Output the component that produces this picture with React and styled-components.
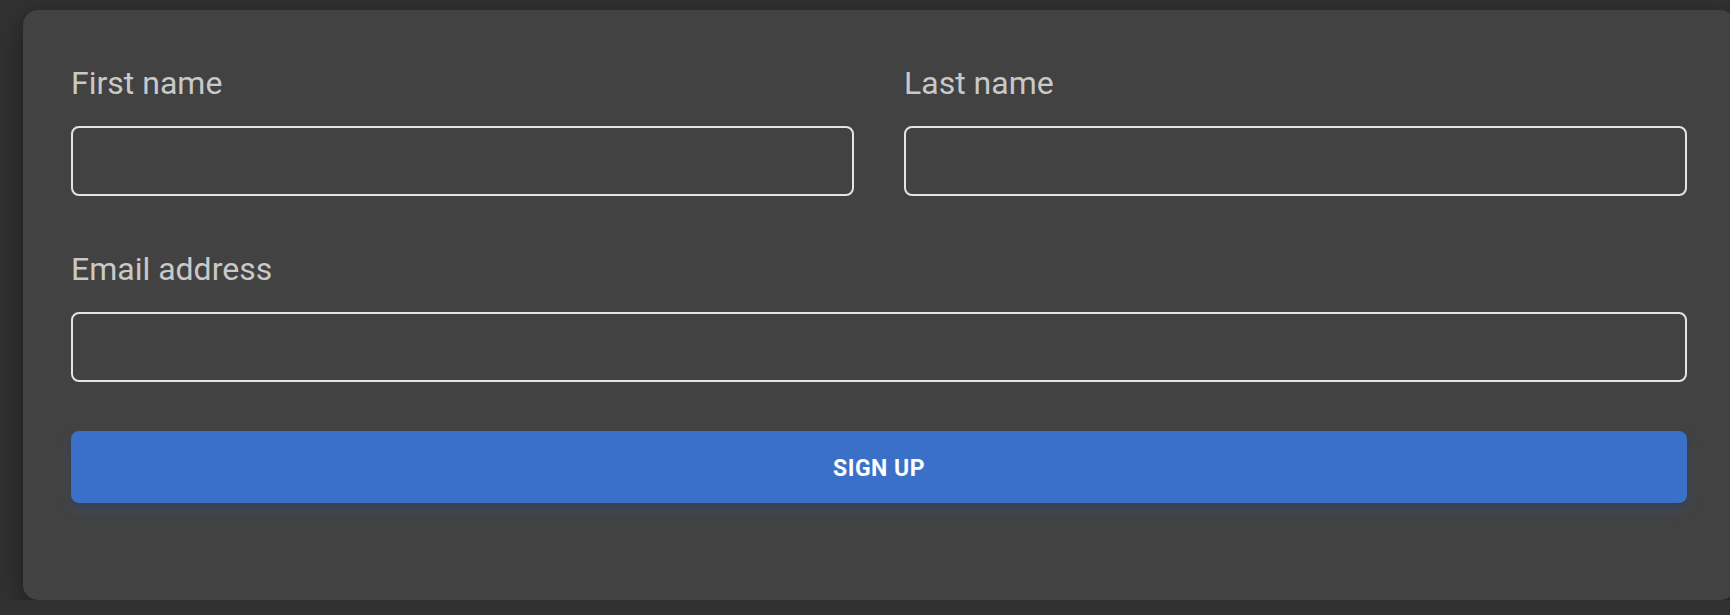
import React from "react";
import styled, { createGlobalStyle } from "styled-components";

const Global = createGlobalStyle`
  html, body {
    margin: 0;
    padding: 0;
    overflow: hidden;
    background: #313131;
  }
  body {
    font-family: Roboto, "Noto Sans", "Liberation Sans", sans-serif;
  }
  * { box-sizing: border-box; }
`;

const Page = styled.div`
  padding: 10px 0 0 23px;
  width: 1760px;
`;

const Card = styled.form`
  width: 1712px;
  background: #424242;
  border-radius: 15px;
  padding: 54px 48px 97px;
  box-shadow: 0 8px 26px rgba(0, 0, 0, 0.4);
  display: flex;
  flex-direction: column;
`;

const Row = styled.div`
  display: grid;
  grid-template-columns: 1fr 1fr;
  column-gap: 50px;
  width: 1616px;
`;

const Field = styled.div`
  display: flex;
  flex-direction: column;
  gap: 24px;
  width: 1616px;
  margin-top: ${(p) => p.$top || 0}px;
  ${Row} & { width: auto; }
`;

const Label = styled.label`
  font-size: 32px;
  line-height: 38px;
  color: rgba(255, 255, 255, 0.72);
  font-weight: 400;
`;

const Input = styled.input`
  height: 70px;
  width: 100%;
  background: transparent;
  border: 2px solid #e4e4e4;
  border-radius: 8px;
  outline: none;
  color: #fff;
  font-size: 24px;
  font-family: inherit;
  padding: 0 16px;
`;

const Button = styled.button`
  margin-top: 49px;
  width: 1616px;
  height: 72px;
  border: none;
  border-radius: 8px;
  background: #3b70c9;
  color: #fff;
  font-family: inherit;
  font-size: 23px;
  font-weight: 700;
  letter-spacing: 0.5px;
  padding-top: 3px;
  text-transform: uppercase;
  box-shadow: 0 6px 14px rgba(59, 112, 201, 0.25), 0 3px 6px rgba(0, 0, 0, 0.2);
  cursor: pointer;
`;

export default function App() {
  return (
    <>
      <Global />
      <Page>
        <Card onSubmit={(e) => e.preventDefault()}>
          <Row>
            <Field>
              <Label>First name</Label>
              <Input type="text" />
            </Field>
            <Field>
              <Label>Last name</Label>
              <Input type="text" />
            </Field>
          </Row>
          <Field $top={54}>
            <Label>Email address</Label>
            <Input type="email" />
          </Field>
          <Button type="submit">Sign up</Button>
        </Card>
      </Page>
    </>
  );
}
